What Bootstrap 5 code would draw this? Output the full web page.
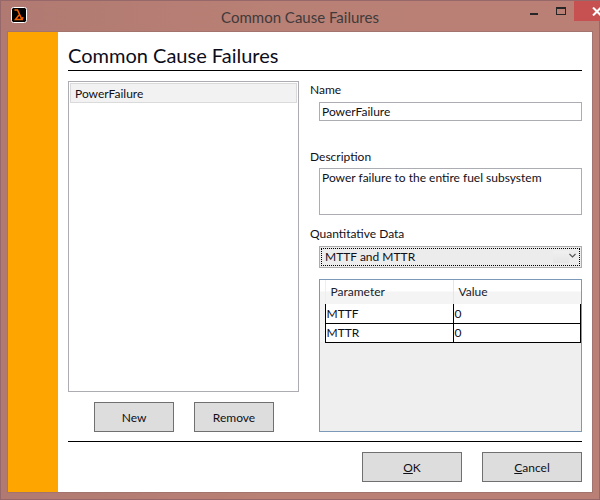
<!DOCTYPE html>
<html lang="en">
<head>
<meta charset="utf-8">
<title>Common Cause Failures</title>
<link href="https://cdn.jsdelivr.net/npm/bootstrap@5.3.0/dist/css/bootstrap.min.css" rel="stylesheet">
<style>
html,body{margin:0;height:500px;width:600px;overflow:hidden;background:#bb8075}
body{font-family:Lato,"Noto Sans",sans-serif;font-size:12px;line-height:18px;color:#101018}
.app-frame{width:600px;height:500px;border:1px solid #96686a;background:linear-gradient(90deg,#b07a72 0,#b98075 45%,#bb8075 100%)}
.app-title{height:30px;padding-left:10px}
.app-title-text{font-size:15px;color:#403a3a;left:0;right:0;top:6px;text-align:center;line-height:20px}
.app-icon{margin-top:6px}
.win-min{width:8px;height:2px;background:#262626;margin-left:503px;margin-top:12px}
.win-max{width:10px;height:8px;border:1px solid #262626;border-top-width:2px;margin-left:18px;margin-top:6px}
.win-close{width:45px;height:20px;margin-left:8px;background:#c75050;margin-top:0}
.app-client{height:462px;margin:0 6px 0 6px;border:1px solid #a3736d;background:#fff}
.side-strip{width:50px;background:#ffa500}
.app-main{width:534px;padding:0 10px}
.head-row{height:39px;border-bottom:1px solid #000;font-size:20px;line-height:26px;padding-top:10px;color:#0d0d1a}
.left-col{width:231px;margin-top:10px}
.item-list{height:311px;border:1px solid #abadb3;padding:1px;background:#fff}
.item-sel{height:20px;background:#f2f2f2;border:1px solid #dadada;padding-left:4px;line-height:19px}
.left-btns{margin-top:10px;padding-left:26px;gap:20px}
.flat-btn{width:80px;height:30px;padding:0;border:1px solid #707070;border-radius:0;background:#ddd;font-size:12px;color:#101018;line-height:27px}
.flat-btn:hover{background:#ddd;color:#101018;border-color:#707070}
.right-col{width:272px;margin-left:11px;margin-top:10px}
.fld-label{height:18px;line-height:18px;margin:0;display:block}
.fld-box{display:block;margin-left:9px;width:263px;border:1px solid #abadb3;border-radius:0;padding:0 2px;font-size:12px;color:#101018;background:#fff;line-height:17px;min-height:0;box-shadow:none}
.name-box{height:19px;margin-top:3px}
.desc-box{height:47px;margin-top:2px;resize:none}
.lbl-desc{margin-top:27px}
.lbl-quant{margin-top:10px}
.quant-sel{display:block;margin:3px 0 0 9px;width:263px;height:22px;border:1px solid #acacac;border-radius:0;font-size:12px;line-height:18px;color:#101018;padding:0 0 0 5px;outline:1px dotted #000;outline-offset:-3px;background-color:#ececec;background-image:linear-gradient(180deg,#f0f0f0,#e5e5e5);box-shadow:none;appearance:none}
.chev{right:6px;top:7px;width:7px;height:5px}
.param-panel{margin:11px 0 0 9px;width:263px;height:153px;border:1px solid #7c99b8;background:#efefef}
.param-tbl{width:261px;margin:0;border-collapse:collapse;table-layout:fixed;font-size:12px;--bs-table-bg:transparent}
.param-tbl th{font-weight:400;height:24px;padding:0 0 0 5px;background:linear-gradient(180deg,#fff 0,#fff 45%,#f4f4f4 50%,#f4f4f4 100%);border-right:1px solid #e6e6e6;border-bottom:0;line-height:22px;vertical-align:middle;color:#202028}
.param-tbl th:last-child{border-right:0}
.param-tbl td{height:19px;padding:0 0 0 1px;border:1px solid #000;border-top:0;background:#fff;line-height:17px;vertical-align:middle;color:#101018}
.param-tbl td:first-child{border-left:0}
.param-tbl .row-gutter{background:#f4f4f4;border:0;padding:0}
.param-tbl th.row-gutter{background:linear-gradient(180deg,#fff 0,#fff 45%,#f4f4f4 50%,#f4f4f4 100%);border-right:1px solid #eee}
.foot-rule{border-top:1px solid #000;margin-top:9px;padding-top:10px;gap:20px}
.foot-btn{width:100px}
</style>
</head>
<body>
<div class="app-frame d-flex flex-column">
  <div class="app-title d-flex position-relative">
    <svg width="16" height="16" viewBox="0 0 16 16" class="app-icon flex-shrink-0" aria-hidden="true">
      <rect x="0.5" y="0.5" width="15" height="15" rx="2" fill="#000" stroke="#fff"/>
      <path d="M3.5 3 H6.5 L10.5 11.5 L12.5 10.5 M8 8 L4.5 12.5 H12" fill="none" stroke="#f06000" stroke-width="1.5"/>
    </svg>
    <div class="app-title-text position-absolute">Common Cause Failures</div>
    <div class="win-min flex-shrink-0"></div>
    <div class="win-max flex-shrink-0"></div>
    <div class="win-close flex-shrink-0 d-flex align-items-center justify-content-center">
      <svg width="10" height="9" viewBox="0 0 10 9" aria-hidden="true"><path d="M1 0.5 L9 8.5 M9 0.5 L1 8.5" stroke="#fff" stroke-width="2"/></svg>
    </div>
  </div>
  <div class="app-client d-flex">
    <div class="side-strip flex-shrink-0"></div>
    <div class="app-main">
      <div class="head-row">Common Cause Failures</div>
      <div class="d-flex">
        <div class="left-col">
          <div class="item-list"><div class="item-sel">PowerFailure</div></div>
          <div class="left-btns d-flex">
            <button type="button" class="btn flat-btn">New</button>
            <button type="button" class="btn flat-btn">Remove</button>
          </div>
        </div>
        <div class="right-col">
          <label class="fld-label">Name</label>
          <input class="form-control fld-box name-box" value="PowerFailure">
          <label class="fld-label lbl-desc">Description</label>
          <textarea class="form-control fld-box desc-box">Power failure to the entire fuel subsystem</textarea>
          <label class="fld-label lbl-quant">Quantitative Data</label>
          <div class="position-relative">
            <select class="form-select quant-sel"><option>MTTF and MTTR</option></select>
            <svg class="chev position-absolute" viewBox="0 0 7 5" aria-hidden="true"><path d="M0.5 1 L3.5 4 L6.5 1" fill="none" stroke="#555" stroke-width="1.2"/></svg>
          </div>
          <div class="param-panel">
            <table class="table param-tbl mb-0">
              <colgroup><col style="width:5px"><col style="width:128px"><col></colgroup>
              <thead><tr><th class="row-gutter"></th><th>Parameter</th><th>Value</th></tr></thead>
              <tbody>
                <tr><td class="row-gutter"></td><td>MTTF</td><td>0</td></tr>
                <tr><td class="row-gutter"></td><td>MTTR</td><td>0</td></tr>
              </tbody>
            </table>
          </div>
        </div>
      </div>
      <div class="foot-rule d-flex justify-content-end">
        <button type="button" class="btn flat-btn foot-btn"><u>O</u>K</button>
        <button type="button" class="btn flat-btn foot-btn"><u>C</u>ancel</button>
      </div>
    </div>
  </div>
</div>
</body>
</html>
